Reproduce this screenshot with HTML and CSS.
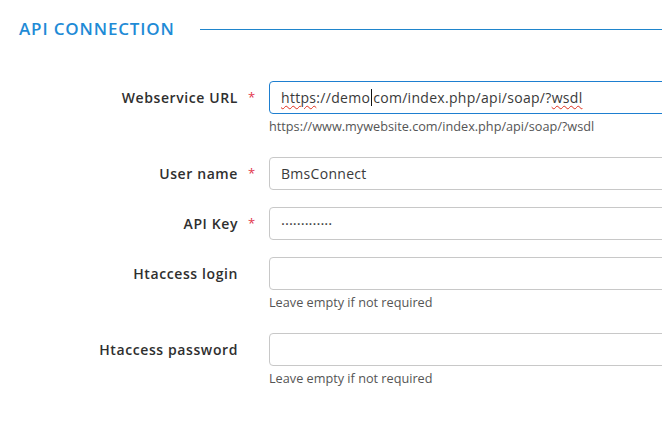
FILE: index.html
```html
<!DOCTYPE html>
<html lang="en">
<head>
<meta charset="utf-8">
<title>API Connection</title>
<link rel="stylesheet" href="styles.css">
</head>
<body>
<div class="page">
  <div class="section-head">
    <h2 class="section-title">API CONNECTION</h2>
    <div class="section-rule"></div>
  </div>
  <div class="form">
    <div class="row">
      <div class="label">Webservice URL</div>
      <div class="req">*</div>
      <div class="field">
        <div class="input focused"><span class="typo">https</span>://demo<span class="caret"></span>com/index.php/api/soap/?<span class="typo">wsdl</span></div>
        <div class="help">https://www.mywebsite.com/index.php/api/soap/?wsdl</div>
      </div>
    </div>
    <div class="row">
      <div class="label">User name</div>
      <div class="req">*</div>
      <div class="field">
        <div class="input">BmsConnect</div>
      </div>
    </div>
    <div class="row">
      <div class="label">API Key</div>
      <div class="req">*</div>
      <div class="field">
        <div class="input pass">·············</div>
      </div>
    </div>
    <div class="row">
      <div class="label">Htaccess login</div>
      <div class="req"></div>
      <div class="field">
        <div class="input"></div>
        <div class="help">Leave empty if not required</div>
      </div>
    </div>
    <div class="row">
      <div class="label">Htaccess password</div>
      <div class="req"></div>
      <div class="field">
        <div class="input"></div>
        <div class="help">Leave empty if not required</div>
      </div>
    </div>
  </div>
</div>
</body>
</html>
```

FILE: styles.css
```css
html, body {
  margin: 0;
  padding: 0;
  background: #ffffff;
  overflow: hidden;
}
body {
  font-family: "Open Sans", "Noto Sans", "Liberation Sans", sans-serif;
  color: #333333;
}
.page {
  width: 662px;
  height: 427px;
  overflow: hidden;
}
.section-head {
  display: flex;
  align-items: center;
  padding: 18px 0 0 19px;
  height: 22px;
}
.section-title {
  margin: 0;
  font-size: 17px;
  font-weight: 600;
  color: #1f8bd6;
  line-height: 22px;
  letter-spacing: 0.85px;
  width: 181px;
  white-space: nowrap;
}
.section-rule {
  flex: 1;
  height: 1px;
  background: #1f85cc;
}
.form {
  padding-top: 41px;
}
.row {
  display: grid;
  grid-template-columns: 238px 31px 440px;
  align-items: start;
  padding-bottom: 17px;
}
.label {
  text-align: right;
  font-size: 14px;
  font-weight: 600;
  letter-spacing: 0.6px;
  line-height: 33px;
  color: #2f2f2f;
  white-space: nowrap;
}
.req {
  padding-left: 10px;
  line-height: 33px;
  font-size: 13px;
  color: #e2354c;
}
.input {
  box-sizing: border-box;
  height: 33px;
  border: 1px solid #c8c8c8;
  border-radius: 4px;
  padding: 0 11px;
  font-size: 14px;
  letter-spacing: 0.3px;
  line-height: 31px;
  color: #3a3a3a;
  white-space: nowrap;
  overflow: hidden;
}
.input.focused {
  border-color: #1e7fd0;
}
.typo {
  text-decoration: underline wavy #e0301e;
  text-decoration-thickness: 1px;
  text-underline-offset: 2px;
}
.caret {
  display: inline-block;
  width: 1px;
  height: 17px;
  background: #111111;
  vertical-align: -3px;
  margin: 0 1px;
}
.pass {
  font-size: 15px;
  letter-spacing: 0;
}
.help {
  margin: 4px 0 6px 0;
  font-size: 12.7px;
  line-height: 16px;
  color: #555555;
  white-space: nowrap;
}
```
